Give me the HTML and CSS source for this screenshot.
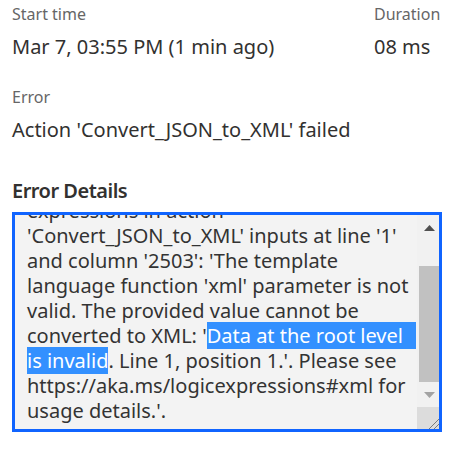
FILE: index.html
```html
<!DOCTYPE html>
<html lang="en">
<head>
<meta charset="utf-8">
<title>Run details</title>
<link rel="stylesheet" href="styles.css">
</head>
<body>
<main class="panel">
  <section class="meta-grid">
    <div class="field">
      <div class="label">Start time</div>
      <div class="value">Mar 7, 03:55 PM (1 min ago)</div>
    </div>
    <div class="field">
      <div class="label">Duration</div>
      <div class="value">08 ms</div>
    </div>
  </section>

  <section class="field error-field">
    <div class="label">Error</div>
    <div class="value">Action 'Convert_JSON_to_XML' failed</div>
  </section>

  <h2 class="details-title">Error Details</h2>

  <div class="fake-textarea">
    <div class="ta-text" id="taText">InvalidTemplate. Unable to process template language
expressions in action
'Convert_JSON_to_XML' inputs at line '1'
and column '2503': 'The template
language function 'xml' parameter is not
valid. The provided value cannot be
converted to XML: '<span class="sel sel-first">Data at the root level</span>
<span class="sel">is invalid</span>. Line 1, position 1.'. Please see
https://aka.ms/logicexpressions#xml for
usage details.'.</div>
    <div class="scrollbar">
      <div class="sb-button">
        <svg width="11" height="6" viewBox="0 0 11 6"><polygon points="0,6 11,6 5.5,0" fill="#505050"/></svg>
      </div>
      <div class="sb-track">
        <div class="sb-thumb"></div>
      </div>
      <div class="sb-button">
        <svg width="11" height="6" viewBox="0 0 11 6"><polygon points="0,0 11,0 5.5,6" fill="#a3a3a3"/></svg>
      </div>
      <div class="sb-resizer">
        <svg width="22" height="22" viewBox="0 0 22 22"><line x1="12" y1="22" x2="22" y2="12" stroke="#7a7a7a" stroke-width="1"/><line x1="17" y1="22" x2="22" y2="17" stroke="#7a7a7a" stroke-width="1"/></svg>
      </div>
    </div>
  </div>
</main>
<script src="app.js"></script>
</body>
</html>
```
FILE: styles.css
```css
html, body {
  margin: 0;
  padding: 0;
  background: #ffffff;
}

body {
  font-family: "Noto Sans", "Open Sans", sans-serif;
  color: #323130;
}

.panel {
  padding: 4px 12px 0 12px;
}

.meta-grid {
  display: grid;
  grid-template-columns: 1fr 68px;
}

.label {
  font-size: 16px;
  line-height: 21px;
  color: #666666;
}

.value {
  margin-top: 8px;
  font-size: 20px;
  line-height: 27px;
  color: #323130;
  white-space: nowrap;
}

.error-field {
  margin-top: 27px;
}

.details-title {
  margin: 34px 0 0 0;
  font-size: 20px;
  line-height: 27px;
  font-weight: 600;
  letter-spacing: -0.5px;
  color: #323130;
}

.fake-textarea {
  margin-top: 8px;
  height: 220px;
  box-sizing: border-box;
  border: 3px solid #1064ff;
  background: #f3f3f3;
  display: flex;
}

.ta-text {
  flex: 1;
  min-width: 0;
  overflow: hidden;
  padding: 0 0 6px 12px;
  font-size: 20px;
  line-height: 25px;
  color: #333333;
  white-space: pre;
}

.sel {
  background: #3390ff;
  color: #ffffff;
}

.sel-first {
  padding-right: 13px;
}

.scrollbar {
  width: 22px;
  display: flex;
  flex-direction: column;
  background: #f1f1f1;
}

.sb-button {
  height: 25px;
  display: flex;
  align-items: center;
  justify-content: center;
  padding-left: 2px;
}

.sb-track {
  flex: 1;
  display: flex;
  flex-direction: column;
  justify-content: flex-end;
}

.sb-thumb {
  height: 116px;
  margin-left: 2px;
  background: #c1c1c1;
}

.sb-resizer {
  height: 22px;
  background: #dcdcdc;
}

.sb-resizer svg {
  display: block;
}
```
FILE: app.js
```js
const t = document.getElementById('taText');
t.scrollTop = t.scrollHeight;
```
